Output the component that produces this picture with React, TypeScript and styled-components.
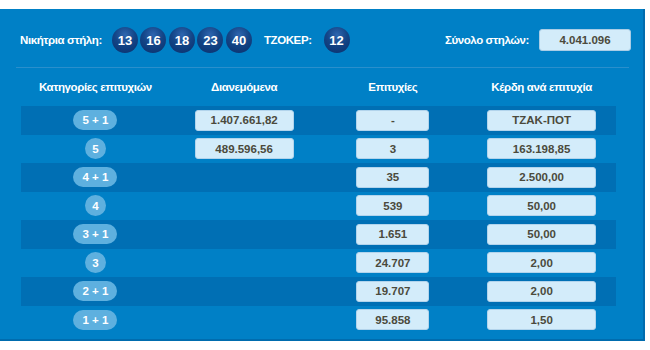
import React from "react";
import styled, { createGlobalStyle } from "styled-components";

const GlobalStyle = createGlobalStyle`
  html, body {
    margin: 0;
    padding: 0;
    background: #ffffff;
    font-family: "Liberation Sans", Arial, sans-serif;
  }
`;

type Row = {
  category: string;
  distributed?: string;
  winners: string;
  prize: string;
};

const winningNumbers = ["13", "16", "18", "23", "40"];

const rows: Row[] = [
  { category: "5 + 1", distributed: "1.407.661,82", winners: "-", prize: "ΤΖΑΚ-ΠΟΤ" },
  { category: "5", distributed: "489.596,56", winners: "3", prize: "163.198,85" },
  { category: "4 + 1", winners: "35", prize: "2.500,00" },
  { category: "4", winners: "539", prize: "50,00" },
  { category: "3 + 1", winners: "1.651", prize: "50,00" },
  { category: "3", winners: "24.707", prize: "2,00" },
  { category: "2 + 1", winners: "19.707", prize: "2,00" },
  { category: "1 + 1", winners: "95.858", prize: "1,50" },
];

const App = () => {
  return (
    <>
      <GlobalStyle />
      <Panel>
        <TopBar>
          <Group>
            <Label>Νικήτρια στήλη:</Label>
            <Balls>
              {winningNumbers.map((n) => (
                <Ball key={n}>{n}</Ball>
              ))}
            </Balls>
            <Label $gap>ΤΖΟΚΕΡ:</Label>
            <Ball>12</Ball>
          </Group>
          <Group>
            <Label>Σύνολο στηλών:</Label>
            <TotalBox>4.041.096</TotalBox>
          </Group>
        </TopBar>
        <Divider />
        <Table>
          <HeaderRow>
            <HeaderCell>Κατηγορίες επιτυχιών</HeaderCell>
            <HeaderCell>Διανεμόμενα</HeaderCell>
            <HeaderCell>Επιτυχίες</HeaderCell>
            <HeaderCell>Κέρδη ανά επιτυχία</HeaderCell>
          </HeaderRow>
          {rows.map((row, i) => (
            <DataRow key={row.category} $dark={i % 2 === 0}>
              <Cell>
                <Pill $round={!row.category.includes("+")}>{row.category}</Pill>
              </Cell>
              <Cell>
                {row.distributed && <ValueBox $width={99}>{row.distributed}</ValueBox>}
              </Cell>
              <Cell>
                <ValueBox $width={73}>{row.winners}</ValueBox>
              </Cell>
              <Cell>
                <ValueBox $width={109}>{row.prize}</ValueBox>
              </Cell>
            </DataRow>
          ))}
        </Table>
      </Panel>
    </>
  );
};

export default App;

const Panel = styled.div`
  margin-top: 9px;
  width: 645px;
  height: 332px;
  box-sizing: border-box;
  background: #0080c6;
  border-right: 2px solid #006cae;
  border-bottom: 2px solid #006cae;
  padding-top: 18px;
  overflow: hidden;
`;

const TopBar = styled.div`
  display: flex;
  justify-content: space-between;
  align-items: center;
  height: 26px;
  padding: 0 12px 0 20px;
`;

const Group = styled.div`
  display: flex;
  align-items: center;
`;

const Label = styled.span<{ $gap?: boolean }>`
  color: #ffffff;
  font-size: 11.5px;
  font-weight: bold;
  margin: ${({ $gap }) => ($gap ? "0 12px 0 12px" : "0 10px 0 0")};
  letter-spacing: -0.4px;
`;

const Balls = styled.div`
  display: flex;
  gap: 2.5px;
`;

const Ball = styled.div`
  width: 26px;
  height: 26px;
  border-radius: 50%;
  background: radial-gradient(circle at 50% 30%, #2e66b0 0%, #134587 45%, #0a2f6b 100%);
  color: #ffffff;
  font-size: 13px;
  font-weight: bold;
  display: flex;
  align-items: center;
  justify-content: center;
`;

const TotalBox = styled.div`
  width: 90px;
  height: 20px;
  background: #d3ecfa;
  border: 1px solid #a9cde6;
  border-radius: 3px;
  color: #4b4a3c;
  font-size: 11.5px;
  font-weight: bold;
  display: flex;
  align-items: center;
  justify-content: center;
`;

const Divider = styled.div`
  margin: 14px 14px 0 16px;
  height: 1px;
  background: #2a8fcc;
`;

const Table = styled.div`
  margin-left: 21px;
  width: 595px;
`;

const HeaderRow = styled.div`
  display: grid;
  grid-template-columns: repeat(4, 1fr);
  height: 38px;
  align-items: center;
`;

const HeaderCell = styled.div`
  color: #ffffff;
  font-size: 11.5px;
  font-weight: bold;
  text-align: center;
  letter-spacing: -0.4px;
`;

const DataRow = styled.div<{ $dark: boolean }>`
  display: grid;
  grid-template-columns: repeat(4, 1fr);
  height: 28.5px;
  align-items: center;
  background: ${({ $dark }) => ($dark ? "#006fb4" : "transparent")};
`;

const Cell = styled.div`
  display: flex;
  justify-content: center;
  align-items: center;
`;

const Pill = styled.div<{ $round: boolean }>`
  width: ${({ $round }) => ($round ? "21px" : "44px")};
  height: ${({ $round }) => ($round ? "21px" : "20px")};
  border-radius: 11px;
  background: #5eb0df;
  color: #ffffff;
  font-size: 11.5px;
  font-weight: bold;
  display: flex;
  align-items: center;
  justify-content: center;
  white-space: pre;
`;

const ValueBox = styled.div<{ $width: number }>`
  width: ${({ $width }) => $width - 2}px;
  height: 19px;
  background: #d3ecfa;
  border: 1px solid #b2d4ec;
  border-radius: 3px;
  color: #4b4a3c;
  font-size: 11.5px;
  font-weight: bold;
  display: flex;
  align-items: center;
  justify-content: center;
`;
